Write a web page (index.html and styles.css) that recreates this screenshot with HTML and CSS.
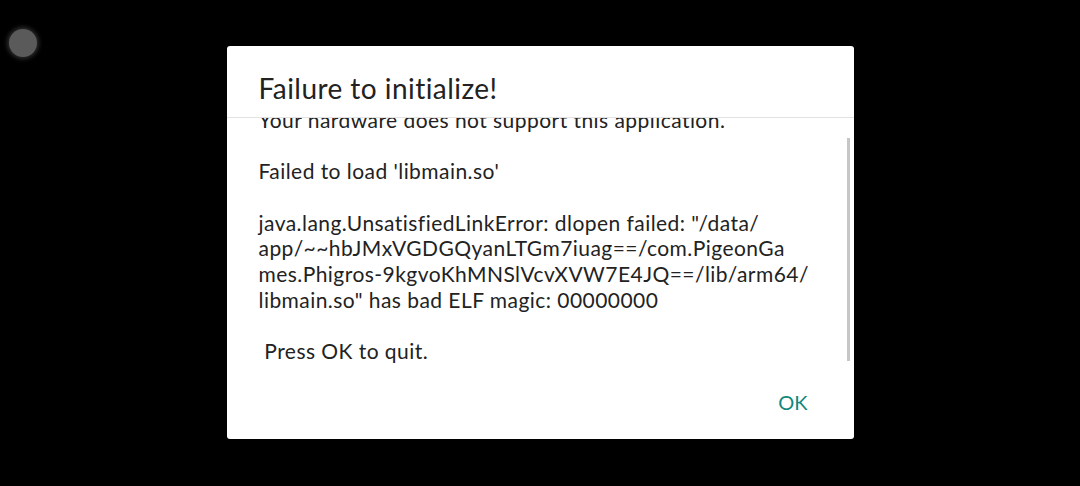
FILE: index.html
```html
<!DOCTYPE html>
<html lang="en">
<head>
    <meta charset="UTF-8">
    <title>Failure to initialize!</title>
    <link rel="stylesheet" href="styles.css">
</head>
<body>
    <div class="touch-dot"></div>

    <div class="dialog">
        <div class="dialog-title">Failure to initialize!</div>
        <div class="dialog-body">
            <div class="message">
                <p>Your hardware does not support this application.</p>
                <p class="gap">Failed to load 'libmain.so'</p>
                <p class="gap">java.lang.UnsatisfiedLinkError: dlopen failed: "/data/<br>app/~~hbJMxVGDGQyanLTGm7iuag==/com.PigeonGa<br>mes.Phigros-9kgvoKhMNSlVcvXVW7E4JQ==/lib/arm64/<br>libmain.so" has bad ELF magic: 00000000</p>
                <p class="gap">&nbsp;Press OK to quit.</p>
            </div>
            <div class="scrollbar"></div>
        </div>
        <div class="dialog-actions">
            <button class="ok-button">OK</button>
        </div>
    </div>
</body>
</html>
```

FILE: styles.css
```css
* {
    margin: 0;
    padding: 0;
    box-sizing: border-box;
    font-family: 'Lato', 'Noto Sans', sans-serif;
}

body {
    width: 1080px;
    height: 486px;
    background-color: #000;
    display: flex;
    align-items: center;
    justify-content: center;
    position: relative;
    overflow: hidden;
}

/* floating touch indicator in the corner */
.touch-dot {
    position: absolute;
    left: 9px;
    top: 29px;
    width: 28px;
    height: 28px;
    border-radius: 50%;
    background: #5a5a5a;
    box-shadow: 0 0 4px 2px rgba(90, 90, 90, 0.5);
}

.dialog {
    width: 627px;
    height: 393px;
    background: #fff;
    border-radius: 3px;
    display: flex;
    flex-direction: column;
    margin-top: -1px;
}

.dialog-title {
    height: 72px;
    padding: 25px 33px 0 32px;
    font-size: 28px;
    letter-spacing: 0.45px;
    color: #222;
    border-bottom: 1px solid #e2e2e2;
}

.dialog-body {
    position: relative;
    height: 260px;
    overflow: hidden;
}

.message {
    margin-top: -11px;
    padding: 0 33px 0 32px;
    font-size: 21px;
    letter-spacing: 0.45px;
    line-height: 25.7px;
    color: #222;
    white-space: nowrap;
}

.message .gap {
    margin-top: 25.7px;
}

.scrollbar {
    position: absolute;
    right: 4px;
    top: 20px;
    width: 3px;
    height: 223px;
    background: #c6c6c6;
}

.dialog-actions {
    flex: 1;
    display: flex;
    justify-content: flex-end;
    align-items: center;
    padding: 0 46px 14px 0;
}

.ok-button {
    border: none;
    background: none;
    color: #11877a;
    font-size: 20px;
    cursor: pointer;
}
```
